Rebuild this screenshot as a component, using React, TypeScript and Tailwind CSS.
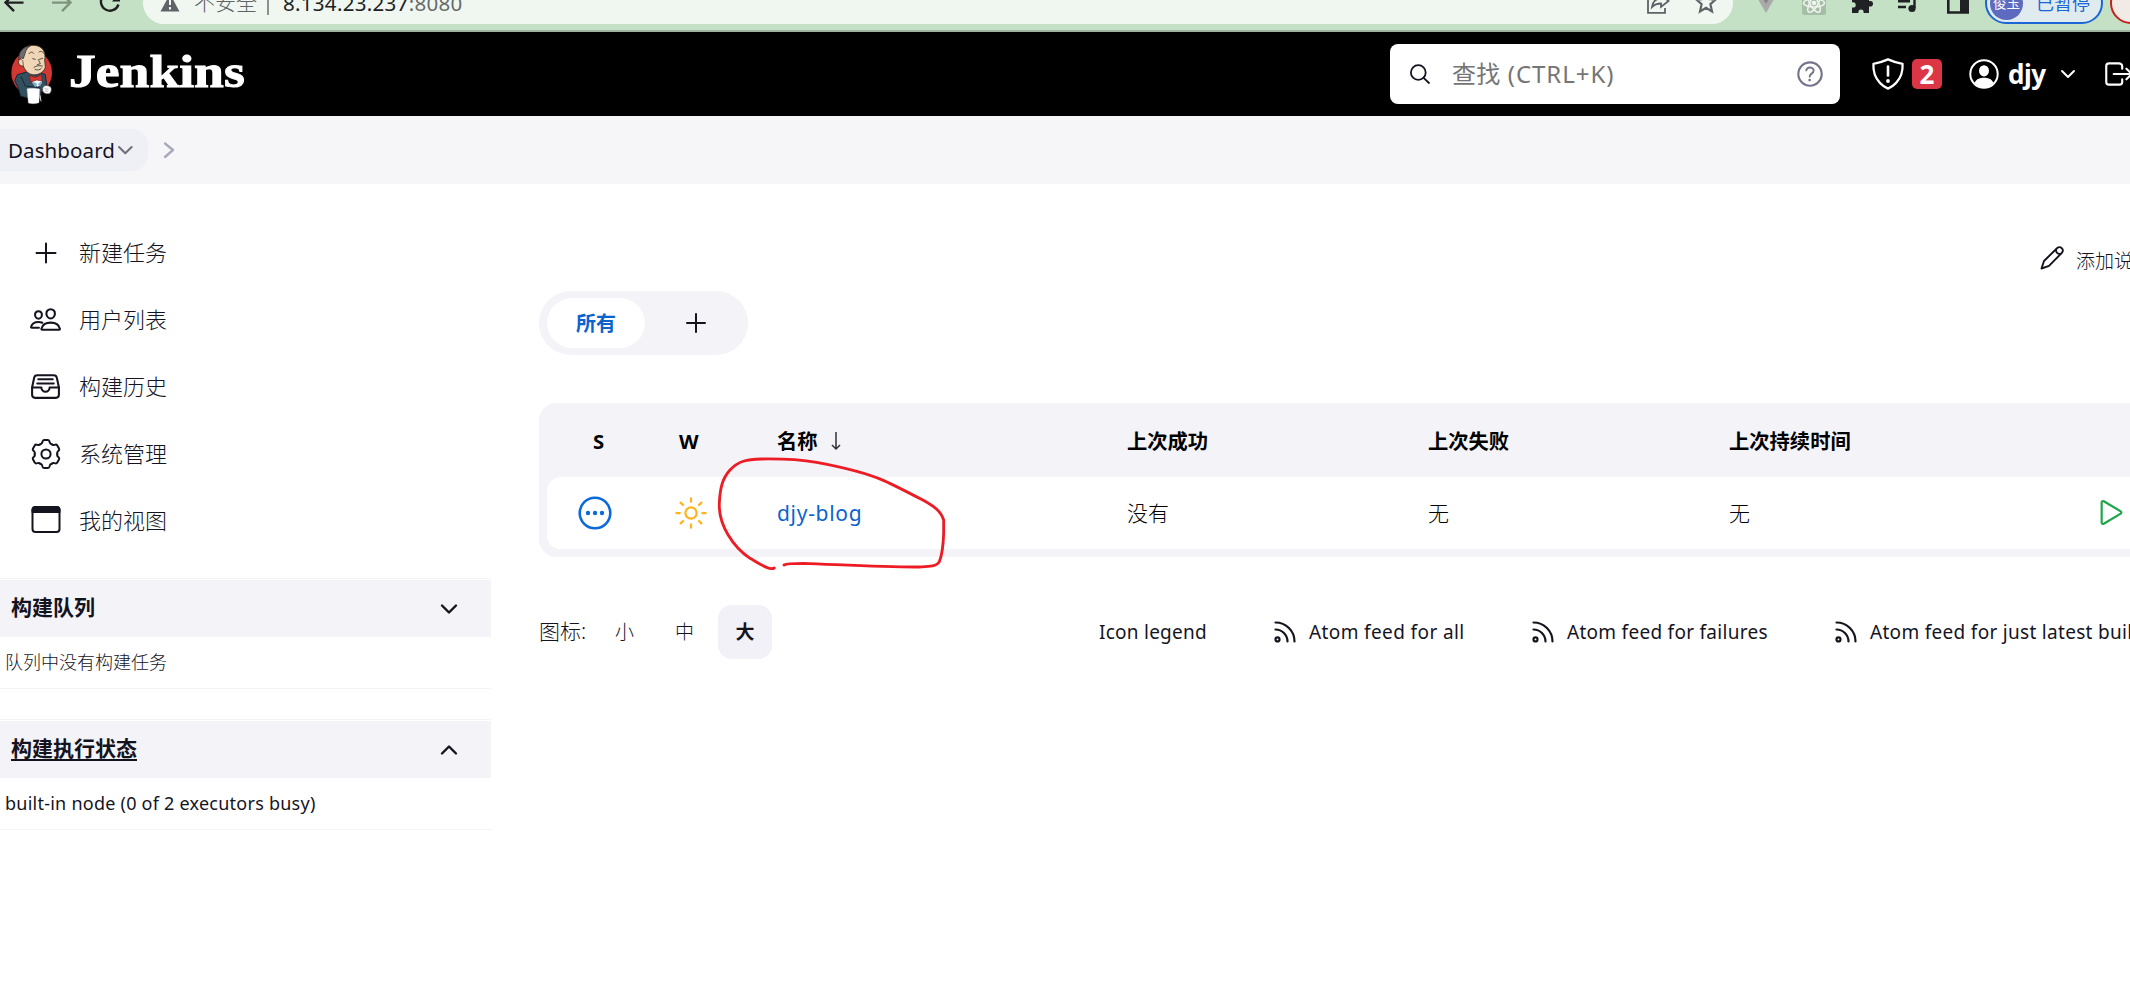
import React from "react";
import {
  IoFileTrayFullOutline,
  IoHelpCircleOutline,
  IoLogOutOutline,
  IoPeopleOutline,
  IoPlayOutline,
  IoShieldOutline,
  IoSunnyOutline,
} from "react-icons/io5";

const svgBase = { fill: "none", stroke: "currentColor", strokeLinecap: "round", strokeLinejoin: "round" } as const;

function BrowserBar() {
  return (
    <div className="h-8 shrink-0 overflow-hidden border-b-2 border-[#9fb5a0] bg-[#c5e1c5]">
      <div className="-mt-[18px] flex h-[42px] items-center whitespace-nowrap">
        <svg className="block h-6 w-[143px] shrink-0" viewBox="0 -9 143 24" {...svgBase} strokeLinecap="butt" strokeLinejoin="miter" strokeWidth="2.4">
          <path d="M23.5 2.6H6M14 -6L5.5 2.6L14 11.2" stroke="#202124" />
          <path d="M52 2.6H70M62 -6L70.500 2.6L62 11.2" stroke="#7e947f" />
          <path d="M118.500 4.500A9 9 0 1 1 116 -5" stroke="#202124" />
          <path d="M112 1.500H120V-8Z" fill="#202124" stroke="none" />
        </svg>
        <div className="flex h-[42px] w-[1590px] shrink-0 items-center rounded-full bg-[#f0f7f1] text-[21px]">
          <svg className="ml-[17px] block h-6 w-5 shrink-0" viewBox="0 -9 20 24">
            <path d="M10 -6L19.500 11.500H.5Z" fill="#5f6368" />
            <path d="M10 0V5M10 7V9.500" stroke="#f0f7f1" strokeWidth="2" />
          </svg>
          <span className="ml-[14px] w-[64px] shrink-0 font-light text-[#5f6368]">不安全</span>
          <span className="ml-[9px] h-6 w-[2px] shrink-0 bg-[#8b918d]" />
          <span className="ml-[14px] text-[20.500px] tracking-[0.300px] text-[#202124]">
            8.134.23.237<span className="text-[#666b68]">:8080</span>
          </span>
          <svg className="ml-auto block h-6 w-6 shrink-0" viewBox="0 -9 24 24" {...svgBase} stroke="#5f6368" strokeWidth="1.800">
            <path d="M6 -4H1V12.800H18V8" strokeLinecap="butt" strokeLinejoin="miter" />
            <path d="M5 7C6 1 9 -1.500 14 -1.500V-5L21.500 1L14 7V3.500C10 3.500 7.500 4.500 5 7Z" strokeLinejoin="miter" />
          </svg>
          <svg className="mr-[15px] ml-[23px] block h-6 w-6 shrink-0" viewBox="0 -9 24 24" fill="none" stroke="#5f6368" strokeWidth="2.200">
            <path d="M12 -7.500L14.800 -1L21.500 -.4L16.400 4.200L18 11.500L12 7.800L6 11.500L7.600 4.200L2.500 -.4L9.200 -1Z" />
          </svg>
        </div>
        <svg className="ml-[22px] block h-6 w-[22px] shrink-0" viewBox="0 -9 22 24">
          <path d="M0 -6H22L11 13Z" fill="#a9aaa9" />
          <path d="M5 -6H17L11 4Z" fill="#858686" />
        </svg>
        <svg className="ml-[25px] block h-6 w-6 shrink-0" viewBox="0 -9 24 24" fill="none">
          <rect y="-9" width="24" height="24" rx="2" fill="#a6bea7" />
          <g stroke="#eef5ee" strokeWidth="1.500" transform="translate(12 3)">
            <ellipse rx="10.500" ry="4" />
            <ellipse rx="10.500" ry="4" transform="rotate(60)" />
            <ellipse rx="10.500" ry="4" transform="rotate(120)" />
            <circle r="1.600" fill="#eef5ee" />
          </g>
        </svg>
        <svg className="ml-[24px] block h-6 w-6 shrink-0" viewBox="0 -9 24 24" fill="#202124">
          <path d="M2 -5H8V-6A2.800 2.800 0 0 1 13.600 -6V-5H19V1H20.200A2.800 2.800 0 0 1 20.200 6.600H19V13H13.600V12A2.600 2.600 0 0 0 8.400 12V13H2V7.600H3A2.700 2.700 0 0 0 3 2.200H2Z" />
        </svg>
        <svg className="ml-[23px] block h-6 w-6 shrink-0" viewBox="0 -9 24 24" fill="none" stroke="#202124" strokeWidth="2.400">
          <path d="M1 -4H13M1 1.300H13M1 7H9M17.500 8V-6H22" />
          <circle cx="15" cy="8.500" r="3.600" fill="#202124" stroke="none" />
        </svg>
        <svg className="ml-[26px] block h-6 w-[22px] shrink-0" viewBox="0 -9 22 24" fill="none">
          <path d="M1.300 -7H20.700V12.500H1.300Z" stroke="#202124" strokeWidth="2.600" />
          <path d="M13 -7H21V12H13Z" fill="#202124" />
        </svg>
        <div className="ml-[16px] flex h-[42px] w-[118px] shrink-0 items-center rounded-full border-2 border-[#1a66d6] bg-[#e0ebf0] pl-[3px]">
          <span className="flex size-[33px] shrink-0 items-center justify-center rounded-full bg-[#5c6bc0] text-[13.500px] text-white">俊玉</span>
          <span className="ml-[13px] text-[18px] text-[#1a66d6]">已暂停</span>
        </div>
        <div className="ml-[7px] h-[42px] w-[90px] shrink-0 rounded-full border-2 border-[#c5221f] bg-[#f1eae5]" />
      </div>
    </div>
  );
}

function JenkinsLogo() {
  return (
    <svg className="ml-[10px] block h-[61px] w-[43px] shrink-0" viewBox="30 130 129 183" strokeLinejoin="round">
      <ellipse cx="95" cy="216" rx="61" ry="66" fill="#d33833" />
      <path d="M52 222L80 214L122 216L136 222L141 262L124 268L122 294L84 292L62 286L55 262L44 240Z" fill="#335061" stroke="#1a2730" strokeWidth="3" />
      <path d="M58 176C54 150 76 133 102 134C130 136 138 156 134 178L136 200C130 218 112 224 98 222C82 220 74 206 70 196C58 198 52 186 58 176Z" fill="#f0d6b7" stroke="#3a2c22" strokeWidth="2.500" />
      <path d="M57 178C54 152 70 138 92 135C80 142 78 150 76 156L70 174L64 172Z" fill="#6d6b6d" stroke="#231f20" strokeWidth="2" />
      <path d="M56 180C60 174 68 176 69 184L70 196" fill="#f0d6b7" stroke="#3a2c22" strokeWidth="2" />
      <g fill="none" stroke="#231f20" strokeWidth="2.200" strokeLinecap="round">
        <path d="M87 159C90 153 98 153 101 158M117 154C123 150 129 153 131 158M98 174L106 176M118 176L128 173M115 177L121 189L112 192" />
        <path d="M102 200C109 195 116 194 127 196" />
        <path d="M105 206C112 210 119 208 124 203" />
      </g>
      <path d="M92 236L108 236L126 238L124 250L112 258L98 248Z" fill="#f7f9fa" />
      <path d="M94 240L106 262L112 250Z" fill="#81b0c4" />
      <path d="M126 240L120 258L114 250Z" fill="#81b0c4" />
      <path d="M88 224L106 230L124 222L127 241L110 238L92 244Z" fill="#d33833" stroke="#7d1714" strokeWidth="2" />
      <path d="M63 228L76 256L122 262" fill="none" stroke="#1a2730" strokeWidth="3" />
      <path d="M81 264C92 262 108 262 119 265L117 306C106 310 94 310 85 307Z" fill="#fff" stroke="#bbb" strokeWidth="1" />
      <path d="M120 284L123 302" stroke="#d9d9d9" strokeWidth="3" />
      <path d="M128 262C132 253 142 253 151 258C156 264 154 276 147 279C139 281 129 277 128 270Z" fill="#fff" stroke="#555" strokeWidth="2" />
      <path d="M134 264L146 266M135 271L145 272" stroke="#777" strokeWidth="1.500" />
    </svg>
  );
}

function Header() {
  return (
    <header className="flex h-[84px] shrink-0 items-center whitespace-nowrap bg-black text-white">
      <JenkinsLogo />
      <div className="ml-[16px] w-[1321px] shrink-0">
        <span className="relative top-[-2px] inline-block origin-left scale-x-[1.165] font-['Liberation_Serif',serif] text-[46px] leading-[60px] font-bold [-webkit-text-stroke:1px_white]">
          Jenkins
        </span>
      </div>
      <div className="flex h-[60px] w-[450px] shrink-0 items-center rounded-lg bg-white pr-[13px] pl-5">
        <svg className="block size-5 shrink-0 text-[#14141f]" viewBox="0 0 20 20" {...svgBase} strokeWidth="1.800">
          <circle cx="8.300" cy="8.500" r="7.400" />
          <path d="M13.600 13.800L19 19" />
        </svg>
        <span className="ml-[22px] text-[24px] text-[#757575]">
          <span className="tracking-[0.300px]">查找</span>
          <span className="tracking-[0.950px]"> (CTRL+K)</span>
        </span>
        <IoHelpCircleOutline className="ml-auto size-[34px] shrink-0 text-[#73738c]" />
      </div>
      <div className="relative ml-[30px] size-9 shrink-0">
        <IoShieldOutline className="size-9" />
        <svg className="absolute inset-0 size-9" viewBox="0 0 36 36" {...svgBase}>
          <path d="M18 10.500V19.500" strokeWidth="2.600" />
          <circle cx="18" cy="25" r="1.900" fill="currentColor" stroke="none" />
        </svg>
      </div>
      <span className="ml-[6px] flex h-[30px] w-[30px] shrink-0 items-center justify-center rounded-[5px] bg-[#dc3545] text-[26px] leading-none font-bold">2</span>
      <svg className="ml-[27px] block size-[30px] shrink-0" viewBox="0 0 30 30" fill="currentColor">
        <circle cx="15" cy="15" r="13.700" fill="none" stroke="currentColor" strokeWidth="2" />
        <ellipse cx="15" cy="11.800" rx="5" ry="5.600" />
        <path d="M5.500 24C7.500 19.500 11.500 18.800 15 18.800C18.500 18.800 22.500 19.500 24.500 24C19 30 11 30 5.500 24Z" />
      </svg>
      <span className="ml-[9px] w-[39px] shrink-0 text-[26px] tracking-[-0.500px] font-bold">djy</span>
      <svg className="ml-[13px] block h-[10px] w-4 shrink-0" viewBox="0 0 16 10" {...svgBase} strokeWidth="2">
        <path d="M2 2L8 8L14 2" />
      </svg>
      <IoLogOutOutline className="ml-[26px] size-[34px] shrink-0" />
    </header>
  );
}

function Breadcrumbs() {
  return (
    <nav className="flex h-[68px] shrink-0 items-center bg-[#f6f6f8] text-[#14141f]">
      <div className="-ml-4 flex h-[42px] w-[164px] shrink-0 items-center rounded-[16px] bg-[#efeff6] pl-[24px]">
        <span className="w-[109px] text-[20.500px] tracking-[0.100px]">Dashboard</span>
        <svg className="block h-[10px] w-4 shrink-0 text-[#6f6f78]" viewBox="0 0 16 10" {...svgBase} strokeWidth="2">
          <path d="M2 2L8.300 8.300L14.600 2" />
        </svg>
      </div>
      <svg className="ml-[14px] block h-[18px] w-[14px] text-[#a9a9bd]" viewBox="0 0 14 18" {...svgBase} strokeWidth="2.400">
        <path d="M3 2.500L11 9L3 16" />
      </svg>
    </nav>
  );
}

const gearAngles = [0, 60, 120, 180, 240, 300];

const tasks = [
  {
    label: "新建任务",
    icon: (
      <svg className="size-[30px]" viewBox="0 0 30 30" {...svgBase} strokeWidth="2">
        <path d="M15 5.500V24.500M5.500 15H24.500" />
      </svg>
    ),
  },
  { label: "用户列表", icon: <IoPeopleOutline className="size-[33px] shrink-0" strokeWidth="6" /> },
  { label: "构建历史", icon: <IoFileTrayFullOutline className="size-[33px] shrink-0" /> },
  {
    label: "系统管理",
    icon: (
      <svg className="size-8" viewBox="-16 -16 32 32" {...svgBase} strokeWidth="2">
        {gearAngles.map((a) => (
          <path
            key={a}
            transform={`rotate(${a})`}
            d="M-5.650 -9.800Q-4 -10 -3.600 -12L-3.400 -12.800Q-3 -14 -1.700 -14H1.700Q3 -14 3.400 -12.800L3.600 -12Q4 -10 5.650 -9.800"
          />
        ))}
        <circle r="4.600" />
      </svg>
    ),
  },
  {
    label: "我的视图",
    icon: (
      <svg className="-mt-[3px] size-[30px]" viewBox="0 0 30 30" {...svgBase} strokeWidth="2">
        <rect x="1.500" y="3" width="27" height="25" rx="3" />
        <path d="M1.500 8V6A3 3 0 0 1 4.500 3H25.500A3 3 0 0 1 28.500 6V8Z" fill="currentColor" />
      </svg>
    ),
  },
];

function Pane({ title, open, underline, children }: { title: string; open: boolean; underline?: boolean; children: React.ReactNode }) {
  return (
    <section className="mb-[30px] border-y border-[#f3f3f8]">
      <div className="mt-[1px] flex h-[57px] items-center bg-[#f3f3f8] pr-[33px] pl-[11px]">
        <span className={underline ? "-mt-[2px] text-[21px] font-bold underline decoration-2 underline-offset-[3px]" : "-mt-[2px] text-[21px] font-bold"}>{title}</span>
        <svg className="ml-auto block h-3 w-[18px]" viewBox="0 0 18 12" {...svgBase} strokeWidth="2.400">
          <path d={open ? "M2 9.500L9 2.500L16 9.500" : "M2 2.500L9 9.500L16 2.500"} />
        </svg>
      </div>
      <div className="flex h-[51px] items-center pl-[5px] text-[18px]">{children}</div>
    </section>
  );
}

function Sidebar() {
  return (
    <aside className="w-[491px] shrink-0 pt-[35px] whitespace-nowrap">
      <div className="mb-[24px]">
        {tasks.map((t) => (
          <div key={t.label} className="flex h-[67px] items-center">
            <span className="ml-[28px] flex w-[35px] justify-center">{t.icon}</span>
            <span className="ml-[16px] text-[22px] font-light">{t.label}</span>
          </div>
        ))}
      </div>
      <Pane title="构建队列" open={false}>
        <span className="font-light">队列中没有构建任务</span>
      </Pane>
      <Pane title="构建执行状态" open underline>
        <span className="text-[18px] tracking-[0.240px]">built-in node (0 of 2 executors busy)</span>
      </Pane>
    </aside>
  );
}

function JobTable() {
  const cols = "grid grid-cols-[88px_89px_350px_301px_301px_371px_80px] items-center";
  return (
    <div className="relative w-[1640px] rounded-[18px] bg-[#f3f3f8] p-2 pt-0 text-black">
      <div className={cols + " h-[74px] pt-[2px] text-[20.300px] font-bold"}>
        <span className="pl-[46px]">S</span>
        <span className="pl-[44px]">W</span>
        <span className="flex items-center pl-[53px]">
          名称
          <svg className="ml-[12px] block h-5 w-3" viewBox="0 0 12 20" fill="none" stroke="#333" strokeWidth="1.500">
            <path d="M6 1V18M2 14L6 18L10 14" />
          </svg>
        </span>
        <span className="pl-[53px]">上次成功</span>
        <span className="pl-[53px]">上次失败</span>
        <span className="pl-[53px]">上次持续时间</span>
        <span />
      </div>
      <div className={cols + " h-[72px] rounded-[14px] bg-white text-[21px]"}>
        <svg className="ml-[31px] block size-[34px] text-[#0b6adb]" viewBox="0 0 34 34" fill="currentColor">
          <circle cx="17" cy="17" r="15.300" fill="none" stroke="currentColor" strokeWidth="2.600" />
          <circle cx="10" cy="17" r="2.200" />
          <circle cx="17" cy="17" r="2.200" />
          <circle cx="24" cy="17" r="2.200" />
        </svg>
        <IoSunnyOutline className="ml-[38px] size-9 text-[#ffb41f]" strokeWidth="6" />
        <span className="pt-[1px] pl-[53px] tracking-[0.700px] text-[#0b63ce]">djy-blog</span>
        <span className="pt-[1px] pl-[53px] font-light">没有</span>
        <span className="pt-[1px] pl-[53px] font-light">无</span>
        <span className="pt-[1px] pl-[53px] font-light">无</span>
        <IoPlayOutline className="ml-[47px] size-[35px] -translate-y-px text-[#1ea64b]" />
      </div>
      <svg className="pointer-events-none absolute top-[50px] left-[170px] h-[130px] w-[250px]" viewBox="567 549 750 390" {...svgBase} stroke="#ed1c24" strokeWidth="8.500">
        <path d="M763 894C750 902 725 885 690 865C640 832 595 765 598 700C600 655 607 625 630 600C655 573 680 568 724 567C790 566 830 567 890 577C960 590 1035 607 1090 631C1130 649 1170 670 1210 691C1240 708 1262 722 1271 750V790C1270 820 1268 850 1258 875C1250 890 1225 890 1200 891C1100 892 980 885 850 880C825 880 800 880 792 885" />
      </svg>
    </div>
  );
}

function RssIcon() {
  return (
    <svg className="block size-6 shrink-0" viewBox="0 0 24 24" {...svgBase} strokeWidth="2.200">
      <path d="M2.500 2.500C13 2.500 21.500 11 21.500 21.500M2.500 9.500C9 9.500 14.500 15 14.500 21.500" />
      <circle cx="4.500" cy="19.400" r="2" />
    </svg>
  );
}

function Footer() {
  return (
    <div className="mt-[48px] flex h-[54px] items-center text-[19px] whitespace-nowrap">
      <span className="w-[76px] shrink-0 text-[21px] font-light">图标:</span>
      <span className="w-[60px] shrink-0 font-light">小</span>
      <span className="w-[43px] shrink-0 font-light">中</span>
      <span className="flex size-[54px] shrink-0 items-center justify-center rounded-[14px] bg-[#f1f1f7] font-bold">大</span>
      <span className="ml-[327px] w-[174px] shrink-0 tracking-[0.250px]">Icon legend</span>
      <RssIcon />
      <span className="ml-[12px] w-[222px] shrink-0 tracking-[0.380px]">Atom feed for all</span>
      <RssIcon />
      <span className="ml-[12px] w-[267px] shrink-0 tracking-[0.280px]">Atom feed for failures</span>
      <RssIcon />
      <span className="ml-[12px] shrink-0 tracking-[0.300px]">Atom feed for just latest builds</span>
    </div>
  );
}

function Main() {
  return (
    <main className="ml-[48px] flex min-w-0 flex-1 flex-col overflow-hidden">
      <div className="mt-[60px] flex h-[32px] shrink-0 items-center pl-[1501px] whitespace-nowrap">
        <svg className="-mt-[4px] block size-6 shrink-0" viewBox="0 0 24 24" {...svgBase} strokeWidth="1.900">
          <path d="M1.500 22.500L4 15L17 2.200C18.600.8 20.500 1 21.800 2.200C23.200 3.700 23 5.600 21.700 7L9 19.800Z" />
          <path d="M16 4C16 6.500 17.500 8 20 8" />
        </svg>
        <span className="ml-[12px] pt-[3px] text-[19px] font-light">添加说明</span>
      </div>
      <div className="mt-[15px] flex h-[64px] w-[209px] shrink-0 items-center rounded-full bg-[#f3f3f8] p-2">
        <span className="flex h-[50px] w-[98px] items-center justify-center rounded-full bg-white pt-[2px] text-[20px] font-bold text-[#0b63ce]">所有</span>
        <svg className="ml-[41px] block size-5" viewBox="0 0 20 20" {...svgBase} strokeWidth="2">
          <path d="M10 1V19M1 10H19" />
        </svg>
      </div>
      <div className="mt-[48px]">
        <JobTable />
      </div>
      <Footer />
    </main>
  );
}

export default function App() {
  return (
    <div className="flex h-screen w-full flex-col overflow-hidden bg-white font-['Noto_Sans','Noto_Sans_CJK_SC',sans-serif] text-[#14141f]">
      <BrowserBar />
      <Header />
      <Breadcrumbs />
      <div className="flex min-h-0 flex-1">
        <Sidebar />
        <Main />
      </div>
    </div>
  );
}
